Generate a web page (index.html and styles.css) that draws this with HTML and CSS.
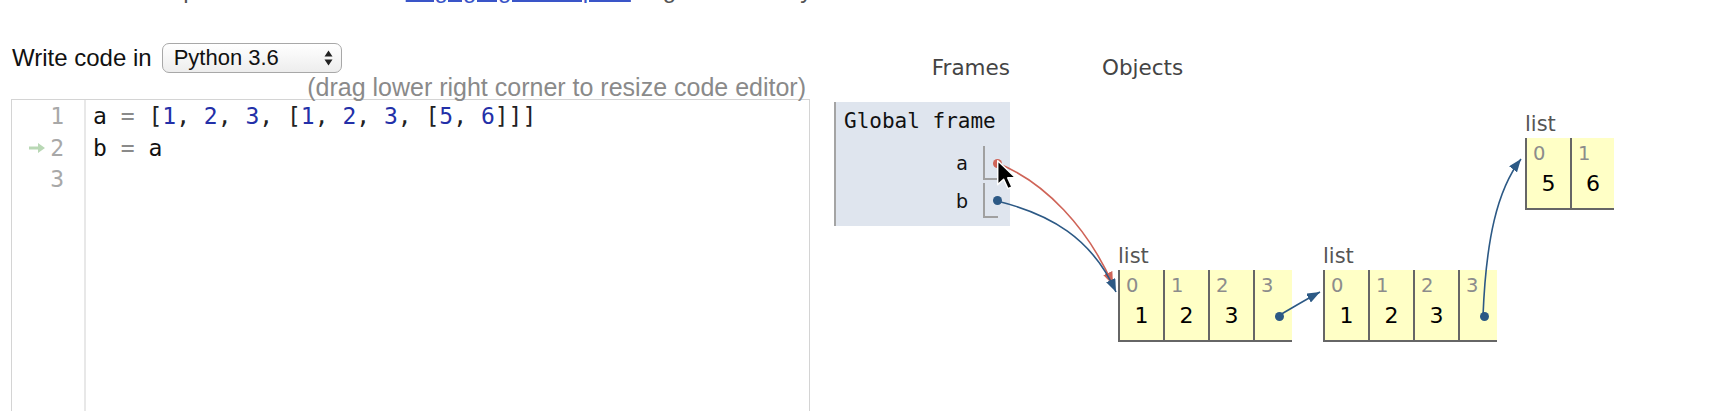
FILE: index.html
```html
<!DOCTYPE html>
<html lang="en">
<head>
<meta charset="utf-8">
<title>Python Tutor - Visualize code</title>
<link rel="stylesheet" href="styles.css">
</head>
<body>
<div class="intro">
  <p class="intro-line"><span class="intro-up">up</span><a class="intro-link" href="#">engaging examples</a><span class="intro-go">go</span><span class="intro-try">try</span></p>
</div>
<main class="layout">
  <section class="editor-col">
    <div class="lang-row">
      <span class="lang-label">Write code in</span>
      <div class="select">
        <span>Python 3.6</span>
        <svg class="select-arrows" width="9" height="16" viewBox="0 0 9 16"><path d="M0.5 6.5 L4.5 0.5 L8.5 6.5 Z M0.5 9.5 L4.5 15.5 L8.5 9.5 Z" fill="#222"/></svg>
      </div>
    </div>
    <div class="hint">(drag lower right corner to resize code editor)</div>
    <div class="editor">
      <div class="gutter">
        <div class="ln">1</div>
        <div class="ln"><svg class="cur-arrow" width="16" height="10" viewBox="0 0 16 10"><path d="M0 3.5 H9 V0 L16 5 L9 10 V6.5 H0 Z" fill="#b9d8b5"/></svg>2</div>
        <div class="ln">3</div>
      </div>
      <div class="code">
        <div class="cl"><span class="v">a</span> <span class="op">=</span> [<span class="n">1</span>, <span class="n">2</span>, <span class="n">3</span>, [<span class="n">1</span>, <span class="n">2</span>, <span class="n">3</span>, [<span class="n">5</span>, <span class="n">6</span>]]]</div>
        <div class="cl"><span class="v">b</span> <span class="op">=</span> <span class="v">a</span></div>
        <div class="cl">&nbsp;</div>
      </div>
    </div>
  </section>
  <section class="viz">
    <div class="viz-head"><span class="frames-h">Frames</span><span class="objects-h">Objects</span></div>
    <div class="canvas">
      <div class="frame">
        <div class="frame-title">Global frame</div>
        <div class="vars">
          <div class="var-name">a</div>
          <div class="var-val"><span class="dot dot-red"></span></div>
          <div class="var-name">b</div>
          <div class="var-val"><span class="dot"></span></div>
        </div>
      </div>
      <div class="heap-obj obj-1">
        <div class="obj-label">list</div>
        <div class="cells">
          <div class="cell"><div class="idx">0</div><div class="val">1</div></div>
          <div class="cell"><div class="idx">1</div><div class="val">2</div></div>
          <div class="cell"><div class="idx">2</div><div class="val">3</div></div>
          <div class="cell cell-ptr"><div class="idx">3</div><span class="dot ptr-dot"></span></div>
        </div>
      </div>
      <div class="heap-obj obj-2">
        <div class="obj-label">list</div>
        <div class="cells">
          <div class="cell"><div class="idx">0</div><div class="val">1</div></div>
          <div class="cell"><div class="idx">1</div><div class="val">2</div></div>
          <div class="cell"><div class="idx">2</div><div class="val">3</div></div>
          <div class="cell cell-ptr"><div class="idx">3</div><span class="dot ptr-dot"></span></div>
        </div>
      </div>
      <div class="heap-obj obj-3">
        <div class="obj-label">list</div>
        <div class="cells">
          <div class="cell"><div class="idx">0</div><div class="val">5</div></div>
          <div class="cell cell-last"><div class="idx">1</div><div class="val">6</div></div>
        </div>
      </div>
    </div>
  </section>
</main>
<svg class="arrows" width="1728" height="411" viewBox="0 0 1728 411">
  <defs>
    <marker id="headBlue" markerUnits="userSpaceOnUse" markerWidth="13" markerHeight="10" refX="13" refY="5" orient="auto">
      <path d="M0 0 L13 5 L0 10 Z" fill="#2c5985"/>
    </marker>
    <marker id="headRed" markerUnits="userSpaceOnUse" markerWidth="13" markerHeight="10" refX="13" refY="5" orient="auto">
      <path d="M0 0 L13 5 L0 10 Z" fill="#cf6458"/>
    </marker>
  </defs>
  <path d="M997 163 C1045 182 1088 228 1113 285" fill="none" stroke="#cf6458" stroke-width="1.6" marker-end="url(#headRed)"/>
  <path d="M997 201 C1050 214 1092 238 1116 292" fill="none" stroke="#2c5985" stroke-width="1.6" marker-end="url(#headBlue)"/>
  <path d="M1278 316 C1292 308 1305 300 1320 292" fill="none" stroke="#2c5985" stroke-width="1.6" marker-end="url(#headBlue)"/>
  <path d="M1483 316 C1486 240 1497 190 1521 159" fill="none" stroke="#2c5985" stroke-width="1.6" marker-end="url(#headBlue)"/>
  <g transform="translate(997 160) scale(1.45)">
    <path d="M0.5 0.5 L0.5 17 L4.6 13.3 L7.6 19.8 L10.3 18.6 L7.4 12.3 L12.8 12.3 Z" fill="#000" stroke="#fff" stroke-width="1" stroke-linejoin="round"/>
  </g>
</svg>
</body>
</html>
```
FILE: styles.css
```css
* { box-sizing: border-box; }

html, body {
  margin: 0;
  padding: 0;
  background: #ffffff;
}

body {
  width: 1728px;
  height: 411px;
  overflow: hidden;
  position: relative;
  font-family: "Liberation Sans", Arial, sans-serif;
  color: #000;
}

/* cut-off intro line at the very top */
.intro {
  height: 4px;
  overflow: hidden;
}

.intro-line {
  margin: -23px 0 0;
  display: flex;
  font-size: 24px;
  line-height: 26px;
  color: #555;
  white-space: nowrap;
}

.intro-up { margin-left: 170px; }

.intro-link {
  margin-left: 209px;
  color: #3a55c8;
  text-decoration: underline;
  letter-spacing: 1px;
}

.intro-go { margin-left: 32px; }
.intro-try { margin-left: 96px; }

/* main layout */
.layout {
  display: flex;
  align-items: flex-start;
}

.editor-col {
  margin-left: 11px;
  width: 799px;
  flex: none;
}

.lang-row {
  display: flex;
  align-items: center;
  height: 30px;
  margin-top: 39px;
}

.lang-label {
  font-size: 24px;
  margin-left: 1px;
  margin-right: 10px;
  color: #111;
}

.select {
  width: 180px;
  height: 30px;
  border: 1px solid #a8a8a8;
  border-radius: 7px;
  background: linear-gradient(#ffffff, #ededed);
  display: flex;
  align-items: center;
  padding-left: 11px;
  font-size: 22px;
  color: #111;
}

.select-arrows {
  margin-left: auto;
  margin-right: 8px;
}

.hint {
  text-align: right;
  font-size: 25px;
  line-height: 26px;
  color: #8a8a8a;
  padding-right: 4px;
  padding-top: 1px;
  height: 26px;
}

/* code editor */
.editor {
  height: 330px;
  border: 1px solid #d4d4d4;
  display: flex;
  font-family: "DejaVu Sans Mono", monospace;
  font-size: 23px;
  line-height: 31.5px;
}

.gutter {
  width: 74px;
  flex: none;
  border-right: 2px solid #e8e8e8;
  padding-top: 1px;
  padding-right: 20px;
  color: #a8a8a8;
}

.ln {
  display: flex;
  justify-content: flex-end;
  align-items: center;
  height: 31.5px;
}

.cur-arrow {
  margin-right: 5px;
}

.code {
  padding-left: 7px;
  padding-top: 1px;
  color: #222;
}

.cl {
  white-space: pre;
  height: 31.5px;
}

.code .n { color: #2330a8; }
.code .op { color: #8a8a8a; }
.code .v { color: #111; }

/* visualization */
.viz {
  margin-left: 24px;
  margin-top: 51px;
  font-family: "DejaVu Sans", Verdana, sans-serif;
}

.viz-head {
  display: flex;
  font-size: 21.5px;
  line-height: 25px;
  color: #444;
}

.frames-h {
  width: 176px;
  text-align: right;
}

.objects-h {
  margin-left: 92px;
}

.canvas {
  position: relative;
  margin-top: 22px;
  width: 860px;
  height: 260px;
}

.frame {
  width: 176px;
  height: 124px;
  background: #dfe5ee;
  border-left: 2px solid #a4a4a4;
  padding: 7px 0 0 8px;
}

.frame-title {
  font-family: "DejaVu Sans Mono", monospace;
  font-size: 21px;
  line-height: 25px;
  color: #111;
}

.vars {
  display: grid;
  grid-template-columns: 124px 15px;
  grid-template-rows: 34px 35px;
  column-gap: 15px;
  row-gap: 3px;
  margin-top: 12px;
}

.var-name {
  text-align: right;
  align-self: center;
  font-size: 19px;
  line-height: 22px;
  color: #111;
}

.var-val {
  position: relative;
  border-left: 2px solid #a0a0a0;
  border-bottom: 2px solid #a0a0a0;
}

.dot {
  position: absolute;
  width: 9px;
  height: 9px;
  border-radius: 50%;
  background: #2c5985;
}

.var-val .dot {
  left: 8px;
  top: 13px;
}

.var-val .dot-red {
  background: #cf6458;
}

/* heap objects (diagram nodes) */
.heap-obj {
  position: absolute;
}

.obj-1 { left: 284px; top: 142px; }
.obj-2 { left: 489px; top: 142px; }
.obj-3 { left: 691px; top: 10px; }

.obj-label {
  font-size: 21px;
  line-height: 24px;
  margin-bottom: 2px;
  color: #555;
}

.cells {
  display: flex;
}

.cell {
  position: relative;
  width: 45px;
  height: 72px;
  background: #ffffc6;
  border-left: 2px solid #666;
  border-bottom: 2px solid #666;
}

.cell-ptr { width: 39px; }
.cell-last { width: 44px; }

.idx {
  font-size: 19.5px;
  line-height: 20px;
  color: #8c8c8c;
  padding: 6px 0 0 6px;
}

.val {
  font-size: 22px;
  line-height: 24px;
  margin-top: 8px;
  text-align: center;
  color: #000;
}

.ptr-dot {
  left: 20px;
  top: 42px;
}

/* arrows overlay */
.arrows {
  position: absolute;
  left: 0;
  top: 0;
  pointer-events: none;
}
```
